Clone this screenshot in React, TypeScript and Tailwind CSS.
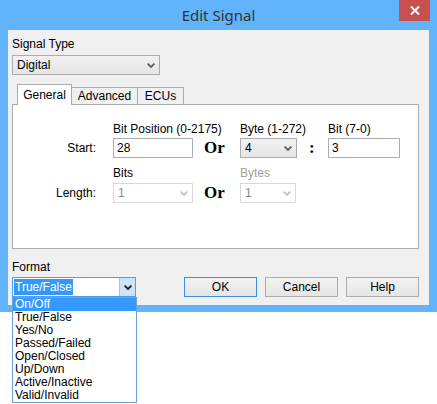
import React from 'react';

const formats = ['On/Off', 'True/False', 'Yes/No', 'Passed/Failed', 'Open/Closed', 'Up/Down', 'Active/Inactive', 'Valid/Invalid'];

function Chevron({ color = '#5f5f5f' }: { color?: string }) {
  return (
    <svg width="8" height="5" viewBox="0 0 8 5">
      <path d="M0.6 0.6 L4 4 L7.4 0.6" fill="none" stroke={color} strokeWidth="1.8" />
    </svg>
  );
}

function Select({ value, width, disabled }: { value: string; width: string; disabled?: boolean }) {
  return (
    <div
      className={`flex h-[20px] items-center justify-between border pl-[4px] pr-[4px] ${width} ${
        disabled ? 'border-[#d9d9d9] bg-white text-[#8a8a8a]' : 'border-[#acacac] bg-linear-to-b from-[#f2f2f2] to-[#e5e5e5]'
      }`}
    >
      <span>{value}</span>
      <Chevron color={disabled ? '#c4c4c4' : '#5f5f5f'} />
    </div>
  );
}

function TextBox({ value, width }: { value: string; width: string }) {
  return <div className={`flex h-[20px] items-center border border-[#abadb3] bg-white pl-[3px] ${width}`}>{value}</div>;
}

function Or() {
  return <span className="w-[47px] pl-[11px] font-['Liberation_Serif',serif] text-[17px] font-bold">Or</span>;
}

function Button({ label, focused }: { label: string; focused?: boolean }) {
  return (
    <div
      className={`flex h-[20px] w-[73px] items-center justify-center border bg-linear-to-b from-[#f2f2f2] to-[#e5e5e5] ${
        focused ? 'border-[#3c8ce6]' : 'border-[#acacac]'
      }`}
    >
      {label}
    </div>
  );
}

export default function App() {
  return (
    <div className="relative h-[404px] w-[437px] bg-white font-['Liberation_Sans',Arial,sans-serif] text-[12px] leading-[14px] text-black">
      <div className="flex h-[312px] flex-col bg-[#62b4fa]">
        {/* title bar */}
        <div className="relative flex h-[30px] shrink-0 items-center justify-center">
          <span className="font-['Noto_Sans',sans-serif] text-[15px] text-[#333333]">Edit Signal</span>
          <div className="absolute right-[7px] top-0 flex h-[21px] w-[31px] items-center justify-center bg-[#c75050]">
            <svg width="10" height="9" viewBox="0 0 10 9">
              <path d="M1 0.5 L9 8.5 M9 0.5 L1 8.5" stroke="white" strokeWidth="2" />
            </svg>
          </div>
        </div>

        {/* client area */}
        <div className="mx-[8px] flex h-[275px] flex-col bg-[#f0f0f0] pl-[4px] pr-[10px] pt-[7px]">
          <span>Signal Type</span>
          <div className="mt-[4px]">
            <Select value="Digital" width="w-[148px]" />
          </div>

          {/* tabs */}
          <div className="mt-[9px] flex h-[20px] items-end pl-[5px]">
            <div className="relative z-10 -mb-px flex h-[21px] w-[55px] items-center justify-center border border-b-0 border-[#acacac] bg-white">
              General
            </div>
            <div className="flex h-[17px] w-[66px] items-center justify-center border border-b-0 border-l-0 border-[#acacac] bg-[#f0f0f0]">
              Advanced
            </div>
            <div className="flex h-[17px] w-[46px] items-center justify-center border border-b-0 border-l-0 border-[#acacac] bg-[#f0f0f0]">
              ECUs
            </div>
          </div>
          <div className="flex h-[145px] w-[407px] flex-col border border-[#acacac] bg-white pt-[17px]">
            <div className="flex pl-[100px]">
              <span className="w-[127px]">Bit Position (0-2175)</span>
              <span className="w-[88px]">Byte (1-272)</span>
              <span>Bit (7-0)</span>
            </div>
            <div className="mt-[2px] flex items-center">
              <span className="w-[83px] text-right">Start:</span>
              <span className="w-[17px]" />
              <TextBox value="28" width="w-[80px]" />
              <Or />
              <Select value="4" width="w-[57px]" />
              <span className="w-[31px] pl-[12px] font-['Liberation_Serif',serif] text-[17px] font-bold">:</span>
              <TextBox value="3" width="w-[72px]" />
            </div>
            <div className="mt-[8px] flex pl-[100px]">
              <span className="w-[127px]">Bits</span>
              <span className="text-[#a0a0a0]">Bytes</span>
            </div>
            <div className="mt-[3px] flex items-center">
              <span className="w-[83px] text-right">Length:</span>
              <span className="w-[17px]" />
              <Select value="1" width="w-[80px]" disabled />
              <Or />
              <Select value="1" width="w-[56px]" disabled />
            </div>
          </div>

          {/* bottom row */}
          <div className="mt-[11px] flex items-end justify-between">
            <div className="flex flex-col">
              <span>Format</span>
              <div className="relative mt-[3px] flex h-[20px] w-[124px] border border-[#569de5] bg-white">
                <div className="flex flex-1 items-center pl-[1px]">
                  <span className="bg-[#3399ff] px-[1px] leading-[16px] text-white">True/False</span>
                </div>
                <div className="flex w-[16px] items-center justify-center border-l border-[#9cc7f0] bg-[#cce4f7]">
                  <Chevron color="#1a1a1a" />
                </div>
                <div className="absolute left-[-1px] top-[19px] z-20 w-[125px] border border-[#6f9fd4] bg-white">
                  {formats.map((f, i) => (
                    <div
                      key={f}
                      className={`h-[13px] pl-[2px] leading-[13px] ${i === 0 ? 'bg-[#3399ff] text-white' : ''}`}
                    >
                      {f}
                    </div>
                  ))}
                </div>
              </div>
            </div>
            <div className="flex gap-[8px]">
              <Button label="OK" focused />
              <Button label="Cancel" />
              <Button label="Help" />
            </div>
          </div>
        </div>
      </div>
    </div>
  );
}
